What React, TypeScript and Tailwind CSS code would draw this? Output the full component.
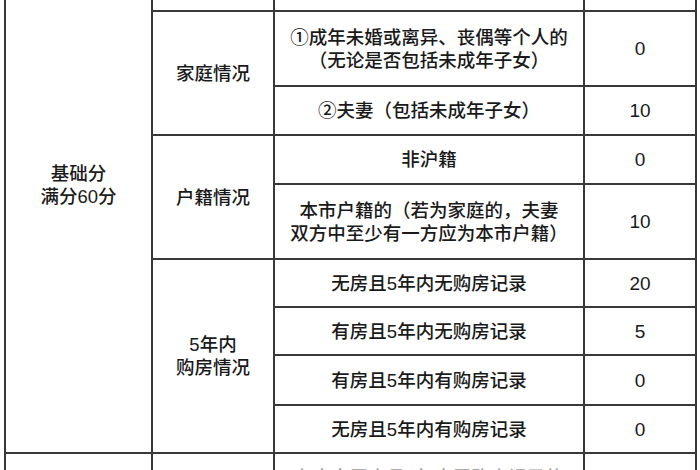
import React from 'react';

type Row = { item: React.ReactNode; score: string };

const font = { fontFamily: '"Liberation Sans", "Noto Sans CJK SC", sans-serif' };

const Cell: React.FC<{ className?: string; children?: React.ReactNode }> = ({ className = '', children }) => (
  <div className={`bg-white flex flex-col items-center justify-center text-center text-[18.5px] leading-[23px] font-medium text-[#1a1a1a] ${className}`}>
    {children}
  </div>
);

const rows: Row[] = [
  { item: <>①成年未婚或离异、丧偶等个人的<br />（无论是否包括未成年子女）</>, score: '0' },
  { item: '②夫妻（包括未成年子女）', score: '10' },
  { item: '非沪籍', score: '0' },
  { item: <>本市户籍的（若为家庭的，夫妻<br />双方中至少有一方应为本市户籍）</>, score: '10' },
  { item: '无房且5年内无购房记录', score: '20' },
  { item: '有房且5年内无购房记录', score: '5' },
  { item: '有房且5年内有购房记录', score: '0' },
  { item: '无房且5年内有购房记录', score: '0' },
];

export default function App() {
  return (
    <div className="h-[470px] w-[700px] overflow-hidden bg-white" style={font}>
      <div className="ml-[4px] grid w-[693px] grid-cols-[145px_120px_308px_110px] grid-rows-[10px_73px_47px_47px_73px_46px_46px_48px_46px_40px] gap-[2px] bg-[#383838] px-[2px]">
        {/* left column */}
        <Cell className="col-start-1 row-start-1 row-span-9 !justify-start pt-[162px]">
          <span>基础分</span>
          <span>满分60分</span>
        </Cell>

        {/* category column */}
        <Cell className="col-start-2 row-start-1" />
        <Cell className="col-start-2 row-start-2 row-span-2">家庭情况</Cell>
        <Cell className="col-start-2 row-start-4 row-span-2">户籍情况</Cell>
        <Cell className="col-start-2 row-start-6 row-span-4">
          <span>5年内</span>
          <span>购房情况</span>
        </Cell>

        {/* first partial row */}
        <Cell className="col-start-3 row-start-1" />
        <Cell className="col-start-4 row-start-1" />

        {rows.map((r, i) => (
          <React.Fragment key={i}>
            <Cell className="col-start-3">{r.item}</Cell>
            <Cell className="col-start-4 text-[19px]">{r.score}</Cell>
          </React.Fragment>
        ))}

        {/* partial bottom row */}
        <Cell className="col-start-1 row-start-10" />
        <Cell className="col-start-2 row-start-10" />
        <Cell className="col-start-3 row-start-10 !justify-start pt-[12px] text-[#a0a0a0]">
          <span>在本市无房且5年内无购房记录的</span>
        </Cell>
        <Cell className="col-start-4 row-start-10" />
      </div>
    </div>
  );
}
